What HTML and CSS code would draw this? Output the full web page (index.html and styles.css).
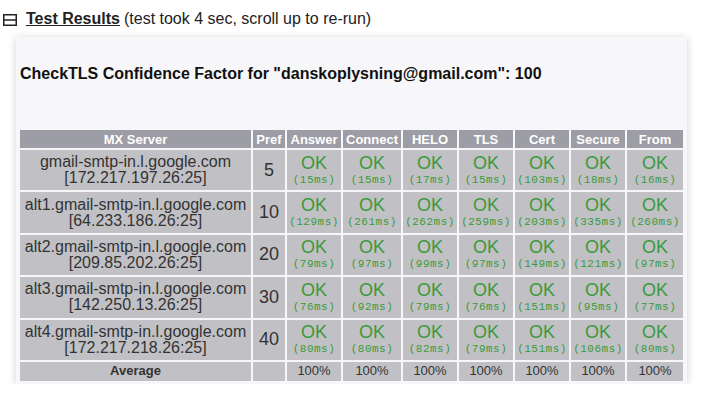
FILE: index.html
```html
<!DOCTYPE html>
<html>
<head>
<meta charset="utf-8">
<link rel="stylesheet" href="styles.css">
</head>
<body>
<div class="top">
  <svg class="toggle" width="14" height="12" viewBox="0 0 14 12"><rect x="0.75" y="0.75" width="12.5" height="10.5" fill="none" stroke="#222" stroke-width="1.5"/><line x1="1" y1="6" x2="13" y2="6" stroke="#222" stroke-width="1.5"/></svg>
  <span class="title">Test Results</span>
  <span class="note">(test took 4 sec, scroll up to re-run)</span>
</div>
<div class="panel">
  <h2 class="factor">CheckTLS Confidence Factor for "danskoplysning@gmail.com": 100</h2>
  <table class="results">
    <thead>
      <tr><th class="c-mx">MX Server</th><th class="c-pref">Pref</th><th class="c-ans">Answer</th><th class="c-con">Connect</th><th class="c-helo">HELO</th><th class="c-tls">TLS</th><th class="c-cert">Cert</th><th class="c-sec">Secure</th><th class="c-from">From</th></tr>
    </thead>
    <tbody>
      <tr><td class="mx">gmail-smtp-in.l.google.com<br>[172.217.197.26:25]</td><td class="pref">5</td>
        <td><span class="ok">OK</span><span class="ms">(15ms)</span></td><td><span class="ok">OK</span><span class="ms">(15ms)</span></td><td><span class="ok">OK</span><span class="ms">(17ms)</span></td><td><span class="ok">OK</span><span class="ms">(15ms)</span></td><td><span class="ok">OK</span><span class="ms">(103ms)</span></td><td><span class="ok">OK</span><span class="ms">(18ms)</span></td><td><span class="ok">OK</span><span class="ms">(16ms)</span></td></tr>
      <tr><td class="mx">alt1.gmail-smtp-in.l.google.com<br>[64.233.186.26:25]</td><td class="pref">10</td>
        <td><span class="ok">OK</span><span class="ms">(129ms)</span></td><td><span class="ok">OK</span><span class="ms">(261ms)</span></td><td><span class="ok">OK</span><span class="ms">(262ms)</span></td><td><span class="ok">OK</span><span class="ms">(259ms)</span></td><td><span class="ok">OK</span><span class="ms">(203ms)</span></td><td><span class="ok">OK</span><span class="ms">(335ms)</span></td><td><span class="ok">OK</span><span class="ms">(260ms)</span></td></tr>
      <tr><td class="mx">alt2.gmail-smtp-in.l.google.com<br>[209.85.202.26:25]</td><td class="pref">20</td>
        <td><span class="ok">OK</span><span class="ms">(79ms)</span></td><td><span class="ok">OK</span><span class="ms">(97ms)</span></td><td><span class="ok">OK</span><span class="ms">(99ms)</span></td><td><span class="ok">OK</span><span class="ms">(97ms)</span></td><td><span class="ok">OK</span><span class="ms">(149ms)</span></td><td><span class="ok">OK</span><span class="ms">(121ms)</span></td><td><span class="ok">OK</span><span class="ms">(97ms)</span></td></tr>
      <tr><td class="mx">alt3.gmail-smtp-in.l.google.com<br>[142.250.13.26:25]</td><td class="pref">30</td>
        <td><span class="ok">OK</span><span class="ms">(76ms)</span></td><td><span class="ok">OK</span><span class="ms">(92ms)</span></td><td><span class="ok">OK</span><span class="ms">(79ms)</span></td><td><span class="ok">OK</span><span class="ms">(76ms)</span></td><td><span class="ok">OK</span><span class="ms">(151ms)</span></td><td><span class="ok">OK</span><span class="ms">(95ms)</span></td><td><span class="ok">OK</span><span class="ms">(77ms)</span></td></tr>
      <tr><td class="mx">alt4.gmail-smtp-in.l.google.com<br>[172.217.218.26:25]</td><td class="pref">40</td>
        <td><span class="ok">OK</span><span class="ms">(80ms)</span></td><td><span class="ok">OK</span><span class="ms">(80ms)</span></td><td><span class="ok">OK</span><span class="ms">(82ms)</span></td><td><span class="ok">OK</span><span class="ms">(79ms)</span></td><td><span class="ok">OK</span><span class="ms">(151ms)</span></td><td><span class="ok">OK</span><span class="ms">(106ms)</span></td><td><span class="ok">OK</span><span class="ms">(80ms)</span></td></tr>
      <tr class="avg"><td class="avg-label">Average</td><td></td><td>100%</td><td>100%</td><td>100%</td><td>100%</td><td>100%</td><td>100%</td><td>100%</td></tr>
    </tbody>
  </table>
</div>
</body>
</html>
```
FILE: styles.css
```css
html, body {
  margin: 0;
  padding: 0;
  background: #ffffff;
}
body {
  font-family: "Liberation Sans", Arial, sans-serif;
  color: #222;
}
.top {
  display: flex;
  align-items: center;
  height: 28px;
  padding-left: 3px;
  padding-top: 10px;
  box-sizing: border-box;
  font-size: 16px;
  line-height: 18px;
  color: #222;
}
.toggle {
  display: block;
  margin-right: 9px;
  margin-top: 2px;
}
.title {
  font-weight: bold;
  text-decoration: underline;
  margin-right: 4px;
}
.note {
  color: #222;
}
.panel {
  margin: 9px 14px 0 16px;
  background: #f7f7f9;
  box-shadow: 0 1px 8px rgba(0,0,0,0.18);
  padding: 28px 4px 1px 4px;
  box-sizing: border-box;
}
.factor {
  margin: 0;
  font-size: 16px;
  font-weight: bold;
  line-height: 18px;
  color: #111;
  padding-left: 0;
}
.results {
  margin-top: 45px;
  border-collapse: separate;
  border-spacing: 2px;
  margin-left: -2px;
  width: 667px;
  table-layout: fixed;
}
.results th {
  background: #9d9da5;
  color: #fff;
  font-size: 13px;
  font-weight: bold;
  height: 18px;
  padding: 0;
  line-height: 15px;
}
.results td {
  background: #c1c1c5;
  text-align: center;
  padding: 0;
  height: 40.4px;
  vertical-align: middle;
}
.c-mx { width: 231px; }
.c-pref { width: 32px; }
.c-ans { width: 54px; }
.c-con { width: 58px; }
.c-helo { width: 54px; }
.c-tls { width: 54px; }
.c-cert { width: 54px; }
.c-sec { width: 54px; }
.c-from { width: 56px; }
.mx {
  font-size: 16px;
  line-height: 16px;
  color: #333;
}
.pref {
  font-size: 18px;
  color: #333;
}
.ok {
  display: block;
  color: #3a9a3a;
  font-size: 18px;
  line-height: 19px;
}
.ms {
  display: block;
  color: #3a9a3a;
  font-family: "Liberation Mono", "DejaVu Sans Mono", monospace;
  font-size: 11px;
  letter-spacing: 0.5px;
  line-height: 14px;
}
.results tr.avg td {
  height: 19px;
  font-size: 13px;
  color: #333;
  line-height: 16px;
}
.results tr.avg td.avg-label {
  font-weight: bold;
}
```
